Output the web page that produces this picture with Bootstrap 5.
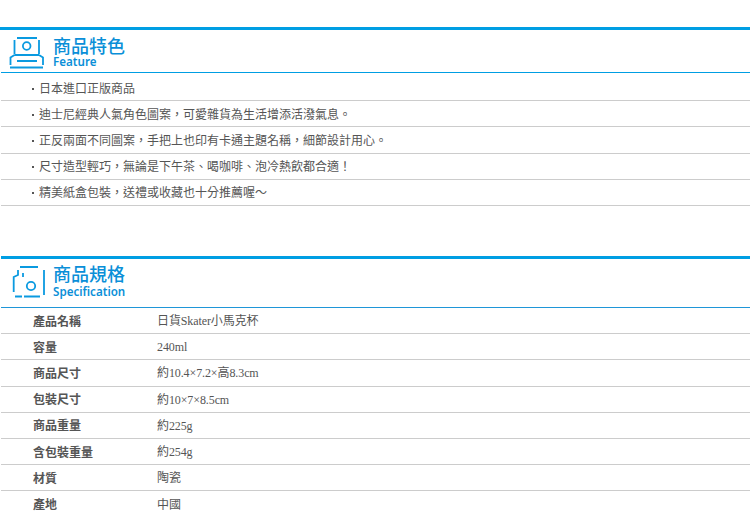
<!DOCTYPE html>
<html lang="zh-Hant">
<head>
<meta charset="utf-8">
<title>商品</title>
<link href="https://cdn.jsdelivr.net/npm/bootstrap@5.3.0/dist/css/bootstrap.min.css" rel="stylesheet">
<style>
html,body{background:#fff;overflow:hidden}
body{font-family:"Liberation Serif","Noto Sans CJK TC",serif;font-size:12px;line-height:1;color:#555;padding-top:27px}
.sect-bar{border-top:3px solid #009ee3;height:45px;padding-left:9px;gap:8px}
.sect-two{margin:50px 0 0 1px;height:51px;padding-left:8px;gap:8px}
.sect-ico{width:36px;height:36px;flex:none;margin-top:4px}
.sect-two .sect-ico{margin-top:5px}
.sect-name{font-family:"Noto Sans CJK TC",sans-serif;font-size:18px;font-weight:500;color:#0a8fd8;line-height:20px;margin-top:5px}
.sect-two .sect-name{margin-top:4px}
.sect-en{font-family:"Noto Sans","Liberation Sans",sans-serif;font-size:11.6px;font-weight:600;color:#0a8fd8;line-height:14px;margin-top:0}
.sect-two .sect-en{margin-top:2px}
.feat-wrap{border-top:1px solid #009ee3;margin-left:1px}
.feat-row{height:26.25px;border-bottom:1px solid #ccc;padding-left:28px;display:flex;align-items:center;font-family:"Noto Sans CJK TC",sans-serif;color:#555}
.feat-row:first-child{height:28px;padding-top:2px}
.feat-row::before{content:"";width:2px;height:2px;background:#555;margin:2px 5px 0 3px;flex:none}
.spec-wrap{border-top:1px solid #1f96d8;margin-left:1px}
.spec-row{height:26.2px;border-bottom:1px solid #ccc;display:flex;align-items:center}
.spec-row:last-child{border-bottom:0}
.spec-key{width:156px;padding-left:32px;font-family:"Noto Sans CJK TC",sans-serif;font-weight:700;color:#555;flex:none}
.spec-val{color:#555;letter-spacing:-.1px;padding-top:1px}
</style>
</head>
<body>
<section>
  <div class="sect-bar d-flex">
    <svg class="sect-ico" viewBox="9 34 36 36" fill="none" stroke="#0a9ae0" stroke-width="1.8">
      <path d="M17 38H37M14.5 40V54M39 40V54M14.5 55H39M14.5 55L10.5 57.5V65M39 55L43 57.5V65M17 61H37M10 67.5H43"/>
      <circle cx="26.7" cy="46" r="3.8"/>
    </svg>
    <div>
      <div class="sect-name">商品特色</div>
      <div class="sect-en">Feature</div>
    </div>
  </div>
  <div class="feat-wrap">
    <div class="feat-row">日本進口正版商品</div>
    <div class="feat-row">迪士尼經典人氣角色圖案，可愛雜貨為生活增添活潑氣息。</div>
    <div class="feat-row">正反兩面不同圖案，手把上也印有卡通主題名稱，細節設計用心。</div>
    <div class="feat-row">尺寸造型輕巧，無論是下午茶、喝咖啡、泡冷熱飲都合適！</div>
    <div class="feat-row">精美紙盒包裝，送禮或收藏也十分推薦喔〜</div>
  </div>
</section>
<section>
  <div class="sect-bar sect-two d-flex">
    <svg class="sect-ico" viewBox="9 264 36 36" fill="none" stroke="#0a9ae0" stroke-width="1.8">
      <path d="M20 267H38M44 270V295M13.7 292V277L18 275V270M23 273V277M15 296.5H22M24 296.5H40"/>
      <circle cx="31" cy="286" r="4.2"/>
    </svg>
    <div>
      <div class="sect-name">商品規格</div>
      <div class="sect-en">Specification</div>
    </div>
  </div>
  <div class="spec-wrap">
    <div class="spec-row"><div class="spec-key">產品名稱</div><div class="spec-val">日貨Skater小馬克杯</div></div>
    <div class="spec-row"><div class="spec-key">容量</div><div class="spec-val">240ml</div></div>
    <div class="spec-row"><div class="spec-key">商品尺寸</div><div class="spec-val">約10.4×7.2×高8.3cm</div></div>
    <div class="spec-row"><div class="spec-key">包裝尺寸</div><div class="spec-val">約10×7×8.5cm</div></div>
    <div class="spec-row"><div class="spec-key">商品重量</div><div class="spec-val">約225g</div></div>
    <div class="spec-row"><div class="spec-key">含包裝重量</div><div class="spec-val">約254g</div></div>
    <div class="spec-row"><div class="spec-key">材質</div><div class="spec-val">陶瓷</div></div>
    <div class="spec-row"><div class="spec-key">產地</div><div class="spec-val">中國</div></div>
  </div>
</section>
<script src="https://cdn.jsdelivr.net/npm/bootstrap@5.3.0/dist/js/bootstrap.bundle.min.js"></script>
</body>
</html>
